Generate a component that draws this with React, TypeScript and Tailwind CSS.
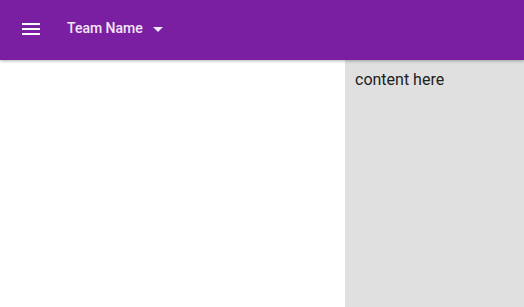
import React from 'react';

export default function App() {
  return (
    <div className="h-[307px] w-[524px] overflow-hidden bg-white flex flex-col font-['Roboto',sans-serif]">
      <header className="relative z-10 h-[60px] shrink-0 bg-[#7b1fa2] flex items-center shadow-[0_1px_3px_rgba(0,0,0,0.3)]">
        <button className="ml-[19px] -mt-[2px] w-6 h-6 flex items-center justify-center">
          <svg width="24" height="24" viewBox="0 0 24 24" fill="#fff">
            <path d="M3 18h18v-2H3v2zm0-5h18v-2H3v2zm0-7v2h18V6H3z" />
          </svg>
        </button>
        <div className="ml-6 -mt-[3px] flex items-center text-[14px] font-medium text-white/90">
          <span>Team Name</span>
          <svg className="ml-[3px]" width="24" height="24" viewBox="0 0 24 24" fill="rgba(255,255,255,0.9)">
            <path d="M7 10l5 5 5-5z" />
          </svg>
        </div>
      </header>
      <div className="flex-1 flex">
        <div className="flex-1" />
        <div className="w-[179px] bg-[#e0e0e0] px-[10px] pt-[8px] text-[16px] text-[#212121]">
          content here
        </div>
      </div>
    </div>
  );
}
